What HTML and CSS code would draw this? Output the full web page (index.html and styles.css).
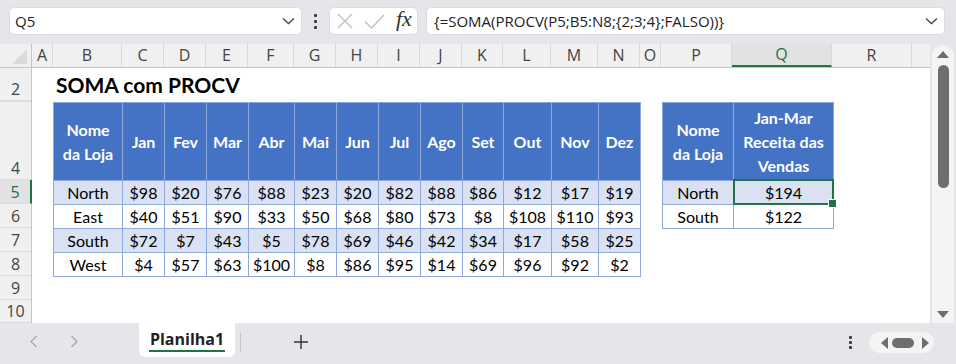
FILE: index.html
```html
<!DOCTYPE html>
<html lang="pt">
<head>
    <meta charset="UTF-8">
    <title>SOMA com PROCV</title>
    <link rel="stylesheet" href="styles.css">
</head>
<body>
    <!-- barra de fórmulas -->
    <div class="toolbar">
        <div class="box namebox">
            <span>Q5</span>
            <svg width="13" height="8" viewBox="0 0 13 8"><path d="M1 1.5L6.5 6.5L12 1.5" stroke="#444" stroke-width="1.3" fill="none"/></svg>
        </div>
        <div class="grip"><span></span><span></span><span></span></div>
        <div class="box fxbox">
            <svg width="16" height="16" viewBox="0 0 16 16"><path d="M1 1L15 15M15 1L1 15" stroke="#bdbdbd" stroke-width="1.3" fill="none"/></svg>
            <svg width="21" height="15" viewBox="0 0 21 15"><path d="M1 7.5L7.5 14L20 1" stroke="#bdbdbd" stroke-width="1.3" fill="none"/></svg>
            <span class="fx">fx</span>
        </div>
        <div class="box formula">
            <span>{=SOMA(PROCV(P5;B5:N8;{2;3;4};FALSO))}</span>
            <svg width="13" height="8" viewBox="0 0 13 8"><path d="M1 1.5L6.5 6.5L12 1.5" stroke="#444" stroke-width="1.3" fill="none"/></svg>
        </div>
    </div>

    <div class="main">
        <div class="sheet">
            <div class="colheads">
                <div class="corner"></div>
                <div class="ch">A</div>
                <div class="ch">B</div>
                <div class="ch">C</div>
                <div class="ch">D</div>
                <div class="ch">E</div>
                <div class="ch">F</div>
                <div class="ch">G</div>
                <div class="ch">H</div>
                <div class="ch">I</div>
                <div class="ch">J</div>
                <div class="ch">K</div>
                <div class="ch">L</div>
                <div class="ch">M</div>
                <div class="ch">N</div>
                <div class="ch">O</div>
                <div class="ch">P</div>
                <div class="ch active">Q</div>
                <div class="ch">R</div>
                <div class="ch last"></div>
            </div>

            <div class="sheet-body">
                <div class="rowheads">
                    <div class="rh">2</div>
                    <div class="rh"></div>
                    <div class="rh">4</div>
                    <div class="rh active">5</div>
                    <div class="rh">6</div>
                    <div class="rh">7</div>
                    <div class="rh">8</div>
                    <div class="rh">9</div>
                    <div class="rh">10</div>
                </div>

                <div class="cells">
                    <div class="title-row"><h1>SOMA com PROCV</h1></div>
                    <div class="spacer"></div>
                    <div class="tables">
                        <div class="xtable sales">
                            <div class="row head">
                                <div class="c">Nome<br>da Loja</div>
                                <div class="c">Jan</div>
                                <div class="c">Fev</div>
                                <div class="c">Mar</div>
                                <div class="c">Abr</div>
                                <div class="c">Mai</div>
                                <div class="c">Jun</div>
                                <div class="c">Jul</div>
                                <div class="c">Ago</div>
                                <div class="c">Set</div>
                                <div class="c">Out</div>
                                <div class="c">Nov</div>
                                <div class="c">Dez</div>
                            </div>
                            <div class="row band">
                                <div class="c">North</div>
                                <div class="c">$98</div>
                                <div class="c">$20</div>
                                <div class="c">$76</div>
                                <div class="c">$88</div>
                                <div class="c">$23</div>
                                <div class="c">$20</div>
                                <div class="c">$82</div>
                                <div class="c">$88</div>
                                <div class="c">$86</div>
                                <div class="c">$12</div>
                                <div class="c">$17</div>
                                <div class="c">$19</div>
                            </div>
                            <div class="row">
                                <div class="c">East</div>
                                <div class="c">$40</div>
                                <div class="c">$51</div>
                                <div class="c">$90</div>
                                <div class="c">$33</div>
                                <div class="c">$50</div>
                                <div class="c">$68</div>
                                <div class="c">$80</div>
                                <div class="c">$73</div>
                                <div class="c">$8</div>
                                <div class="c">$108</div>
                                <div class="c">$110</div>
                                <div class="c">$93</div>
                            </div>
                            <div class="row band">
                                <div class="c">South</div>
                                <div class="c">$72</div>
                                <div class="c">$7</div>
                                <div class="c">$43</div>
                                <div class="c">$5</div>
                                <div class="c">$78</div>
                                <div class="c">$69</div>
                                <div class="c">$46</div>
                                <div class="c">$42</div>
                                <div class="c">$34</div>
                                <div class="c">$17</div>
                                <div class="c">$58</div>
                                <div class="c">$25</div>
                            </div>
                            <div class="row">
                                <div class="c">West</div>
                                <div class="c">$4</div>
                                <div class="c">$57</div>
                                <div class="c">$63</div>
                                <div class="c">$100</div>
                                <div class="c">$8</div>
                                <div class="c">$86</div>
                                <div class="c">$95</div>
                                <div class="c">$14</div>
                                <div class="c">$69</div>
                                <div class="c">$96</div>
                                <div class="c">$92</div>
                                <div class="c">$2</div>
                            </div>
                        </div>

                        <div class="xtable summary">
                            <div class="row head">
                                <div class="c">Nome<br>da Loja</div>
                                <div class="c">Jan-Mar<br>Receita das<br>Vendas</div>
                            </div>
                            <div class="row band">
                                <div class="c">North</div>
                                <div class="c selected">$194</div>
                            </div>
                            <div class="row">
                                <div class="c">South</div>
                                <div class="c">$122</div>
                            </div>
                        </div>
                    </div>
                </div>
            </div>
        </div>

        <div class="vscroll">
            <div class="track">
                <div class="tri-up"></div>
                <div class="thumb"></div>
                <div class="tri-down"></div>
            </div>
        </div>
    </div>

    <!-- abas das planilhas -->
    <div class="tabs">
        <div class="nav">
            <svg width="9" height="13" viewBox="0 0 9 13"><path d="M7.5 1L2 6.5L7.5 12" stroke="#a8a8a8" stroke-width="1.3" fill="none"/></svg>
            <svg width="9" height="13" viewBox="0 0 9 13"><path d="M1.5 1L7 6.5L1.5 12" stroke="#a8a8a8" stroke-width="1.3" fill="none"/></svg>
        </div>
        <div class="tab"><span>Planilha1</span></div>
        <div class="tab-sep"></div>
        <svg class="plus" width="14" height="14" viewBox="0 0 14 14"><path d="M7 0V14M0 7H14" stroke="#333" stroke-width="1.4" fill="none"/></svg>
        <div class="grip small"><span></span><span></span><span></span></div>
        <div class="hscroll">
            <div class="tri-left"></div>
            <div class="hthumb"></div>
            <div class="tri-right"></div>
        </div>
    </div>
</body>
</html>
```

FILE: styles.css
```css
* {
    box-sizing: border-box;
}
body {
    margin: 0;
    width: 956px;
    height: 364px;
    overflow: hidden;
    background-color: #e4e6ea;
    font-family: "Open Sans", "Noto Sans", sans-serif;
    color: #222;
}

/* barra de fórmulas */
.toolbar {
    display: flex;
    align-items: flex-start;
    height: 44px;
    padding: 7px 11px 0 9px;
}
.box {
    display: flex;
    align-items: center;
    height: 28px;
    background-color: #fff;
    border: 1px solid #dadce0;
    border-radius: 5px;
    font-size: 15px;
}
.namebox {
    width: 293px;
    padding: 0 6px 0 5px;
    justify-content: space-between;
}
.grip {
    display: flex;
    flex-direction: column;
    align-items: center;
    justify-content: center;
    gap: 3px;
    width: 27px;
    height: 28px;
}
.grip span {
    width: 3px;
    height: 3px;
    background-color: #3a3a3a;
    border-radius: 1px;
}
.fxbox {
    width: 89px;
    padding: 0 0 0 7px;
    gap: 11px;
}
.fx {
    font-family: "Liberation Serif", serif;
    font-style: italic;
    font-size: 22px;
    color: #333;
    margin-top: -4px;
}
.formula {
    flex: 1;
    margin-left: 8px;
    padding: 0 6px 0 7px;
    justify-content: space-between;
}

/* planilha */
.main {
    display: flex;
    height: 279px;
}
.sheet {
    width: 930px;
    background-color: #fff;
}
.colheads {
    display: grid;
    grid-template-columns: 32px 21px 69px 42px 42px 42px 46px 42px 42px 42px 42px 41px 48px 47px 42px 21px 71px 100px 80px 18px;
    height: 24px;
    background-color: #f0f0f0;
    border-bottom: 1px solid #c6c6c6;
}
.corner {
    position: relative;
    border-right: 1px solid #c6c6c6;
}
.corner::after {
    content: '';
    position: absolute;
    right: 4px;
    bottom: 3px;
    border-style: solid;
    border-width: 0 0 15px 15px;
    border-color: transparent transparent #dadada transparent;
}
.ch {
    border-right: 1px solid #d8d8d8;
    text-align: center;
    font-size: 16px;
    line-height: 23px;
    color: #444;
}
.ch.last {
    border-right: none;
}
.ch.active {
    background-color: #e2e2e2;
    color: #217346;
    border-bottom: 2px solid #217346;
    line-height: 21px;
}

.sheet-body {
    display: flex;
}
.rowheads {
    display: grid;
    grid-template-rows: 33px 1px 78px 24px 24px 24px 24px 24px 23px;
    width: 32px;
    background-color: #f0f0f0;
    border-right: 1px solid #c6c6c6;
}
.rh {
    display: flex;
    align-items: flex-end;
    justify-content: center;
    border-bottom: 1px solid #dcdcdc;
    font-size: 16px;
    line-height: 22px;
    color: #444;
    overflow: hidden;
}
.rh.active {
    background-color: #e2e2e2;
    color: #217346;
    border-right: 2px solid #217346;
    margin-right: -1px;
}

.cells {
    flex: 1;
}
.title-row {
    display: flex;
    align-items: flex-end;
    height: 33px;
    padding: 0 0 3px 24px;
}
.title-row h1 {
    margin: 0;
    font-family: Lato, "Liberation Sans", sans-serif;
    font-size: 21px;
    line-height: 26px;
    font-weight: bold;
    color: #000;
}
.spacer {
    height: 1px;
}
.tables {
    display: flex;
    align-items: flex-start;
    gap: 21px;
    padding-left: 21px;
}
.xtable {
    display: grid;
    gap: 1px;
    padding: 1px;
    background-color: #8eaadb;
    font-family: Lato, "Liberation Sans", sans-serif;
    font-size: 16px;
}
.sales {
    grid-template-columns: 68px 41px 41px 41px 45px 41px 41px 41px 41px 40px 47px 46px 41px;
    grid-template-rows: 77px repeat(4, 23px);
}
.summary {
    grid-template-columns: 70px 99px;
    grid-template-rows: 77px 23px 23px;
}
.row {
    display: contents;
}
.c {
    display: flex;
    align-items: center;
    justify-content: center;
    text-align: center;
    line-height: 23px;
    background-color: #fff;
    color: #000;
    white-space: nowrap;
}
.head .c {
    background-color: #4472c4;
    color: #fff;
    font-weight: bold;
    line-height: 24px;
}
.band .c {
    background-color: #d9e1f2;
}
.c.selected {
    position: relative;
}
.c.selected::after {
    content: '';
    position: absolute;
    top: -2px;
    left: -1px;
    right: -1px;
    bottom: -1px;
    border: 2px solid #217346;
}
.c.selected::before {
    content: '';
    position: absolute;
    right: -4px;
    bottom: -4px;
    width: 7px;
    height: 7px;
    background-color: #217346;
    border: 1px solid #fff;
    z-index: 1;
}

/* barra de rolagem vertical */
.vscroll {
    width: 26px;
    padding: 1px 2px 0 2px;
}
.track {
    display: flex;
    flex-direction: column;
    align-items: center;
    height: 100%;
    background-color: #f4f4f4;
    border-radius: 11px 11px 0 0;
    padding: 6px 0 5px;
}
.tri-up {
    border-style: solid;
    border-width: 0 6px 7px 6px;
    border-color: transparent transparent #6e6e6e transparent;
}
.thumb {
    width: 11px;
    height: 123px;
    margin-top: 7px;
    background-color: #6e6e6e;
    border-radius: 6px;
}
.tri-down {
    margin-top: auto;
    border-style: solid;
    border-width: 7px 6px 0 6px;
    border-color: #6e6e6e transparent transparent transparent;
}

/* abas */
.tabs {
    display: flex;
    align-items: flex-start;
    height: 41px;
}
.nav {
    display: flex;
    gap: 32px;
    width: 139px;
    padding: 12px 0 0 29px;
}
.tab {
    width: 96px;
    height: 34px;
    background-color: #fff;
    border-radius: 0 0 6px 6px;
    text-align: center;
    padding-top: 5px;
}
.tab span {
    display: inline-block;
    font-weight: bold;
    font-size: 16px;
    line-height: 22px;
    color: #222;
    border-bottom: 2px solid #217346;
    padding: 0 1px;
}
.tab-sep {
    width: 1px;
    height: 19px;
    margin: 10px 0 0 5px;
    background-color: #c6c6c6;
}
.plus {
    margin: 12px 0 0 53px;
}
.grip.small {
    height: auto;
    width: 3px;
    margin: 13px 0 0 541px;
    gap: 2px;
}
.hscroll {
    display: flex;
    align-items: center;
    gap: 4px;
    width: 65px;
    height: 21px;
    margin: 9px 0 0 17px;
    padding-left: 12px;
    background-color: #f4f4f4;
    border-radius: 11px;
}
.tri-left {
    border-style: solid;
    border-width: 6px 7px 6px 0;
    border-color: transparent #6e6e6e transparent transparent;
}
.hthumb {
    width: 22px;
    height: 10px;
    background-color: #6e6e6e;
    border-radius: 5px;
}
.tri-right {
    margin-left: 4px;
    border-style: solid;
    border-width: 6px 0 6px 7px;
    border-color: transparent transparent transparent #6e6e6e;
}
```
